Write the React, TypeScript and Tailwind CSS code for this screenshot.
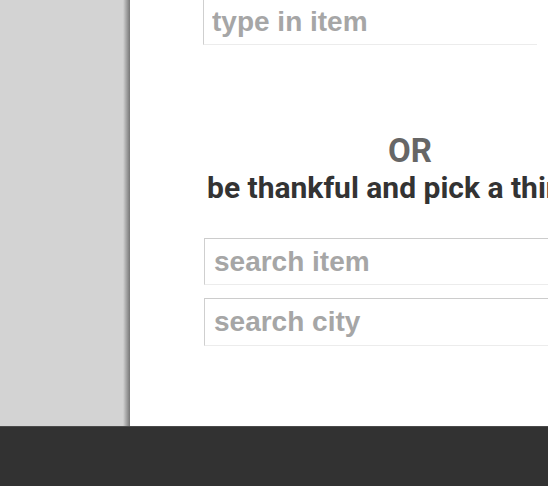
import React from "react";

export default function App() {
  return (
    <div className="w-[548px] h-[486px] overflow-hidden flex flex-col bg-white">
      <div className="h-[426px] flex shrink-0">
        <div className="w-[123px] bg-[#d3d3d3] shrink-0" />
        <div className="w-[7px] shrink-0 bg-gradient-to-r from-[#d3d3d3] to-[#777777]" />
        <div className="w-[560px] shrink-0 bg-white flex flex-col">
          <input
            placeholder="type in item"
            className="mt-[-2px] ml-[73px] w-[334px] h-[47px] shrink-0 border-t border-t-[#e2e2e2] border-l border-l-[#cfcfcf] border-b border-b-[#ececec] border-r-0 pl-[8px] outline-none text-[28px] font-bold text-[#a6a6a6] placeholder:text-[#a6a6a6] [font-family:'Liberation_Sans',Arial,sans-serif]"
          />
          <div className="mt-[86px] text-center text-[33px] leading-[40px] font-bold text-[#666666] [font-family:Roboto,sans-serif]">
            OR
          </div>
          <div className="mt-[-1px] ml-[77px] text-left text-[30px] leading-[36px] font-bold text-[#333333] whitespace-nowrap [font-family:Roboto,sans-serif]">
            be thankful and pick a thing
          </div>
          <input
            placeholder="search item"
            className="mt-[32px] ml-[74px] w-[420px] h-[47px] shrink-0 border-t border-t-[#cccccc] border-l border-l-[#cfcfcf] border-b border-b-[#ececec] border-r-0 pl-[9px] outline-none text-[28px] font-bold text-[#a6a6a6] placeholder:text-[#a6a6a6] [font-family:'Liberation_Sans',Arial,sans-serif]"
          />
          <input
            placeholder="search city"
            className="mt-[13px] ml-[74px] w-[420px] h-[48px] shrink-0 border-t border-t-[#cccccc] border-l border-l-[#cfcfcf] border-b border-b-[#ececec] border-r-0 pl-[9px] outline-none text-[28px] font-bold text-[#a6a6a6] placeholder:text-[#a6a6a6] [font-family:'Liberation_Sans',Arial,sans-serif]"
          />
        </div>
      </div>
      <div className="h-[60px] shrink-0 bg-[#323232] border-t border-t-[#4a4a4a]" />
    </div>
  );
}
